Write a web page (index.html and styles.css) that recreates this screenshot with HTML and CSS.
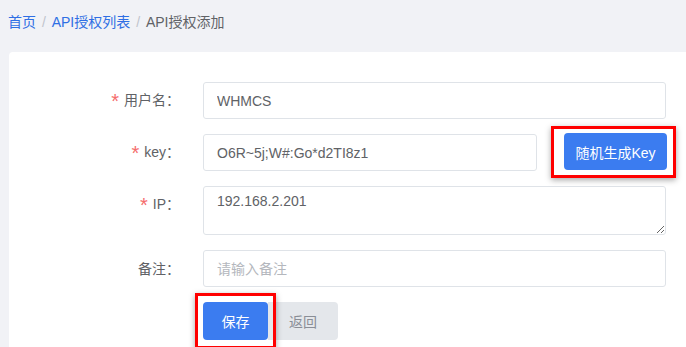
FILE: index.html
```html
<!DOCTYPE html>
<html lang="zh-CN">
<head>
    <meta charset="UTF-8">
    <title>API授权添加</title>
    <link rel="stylesheet" href="styles.css">
</head>
<body>
    <!-- Breadcrumb -->
    <nav class="breadcrumb">
        <a href="#">首页</a>
        <span class="sep">/</span>
        <a href="#">API授权列表</a>
        <span class="sep">/</span>
        <span class="current">API授权添加</span>
    </nav>

    <div class="card">
        <form class="api-form">
            <div class="form-row">
                <label class="form-label required">用户名：</label>
                <div class="form-field">
                    <input class="text-input" type="text" value="WHMCS">
                </div>
            </div>

            <div class="form-row">
                <label class="form-label required">key：</label>
                <div class="form-field key-field">
                    <input class="text-input" type="text" value="O6R~5j;W#:Go*d2TI8z1">
                    <span class="highlight highlight-key">
                        <button type="button" class="btn btn-primary btn-key">随机生成Key</button>
                    </span>
                </div>
            </div>

            <div class="form-row">
                <label class="form-label required label-top">IP：</label>
                <div class="form-field">
                    <textarea class="text-area">192.168.2.201</textarea>
                </div>
            </div>

            <div class="form-row">
                <label class="form-label">备注：</label>
                <div class="form-field">
                    <input class="text-input" type="text" placeholder="请输入备注">
                </div>
            </div>

            <div class="form-row">
                <span class="form-label"></span>
                <div class="form-field actions">
                    <span class="highlight highlight-save">
                        <button type="button" class="btn btn-primary btn-save">保存</button>
                    </span>
                    <button type="button" class="btn btn-back">返回</button>
                </div>
            </div>
        </form>
    </div>
</body>
</html>
```

FILE: styles.css
```css
/* Page basics */
body {
    margin: 0;
    height: 347px;
    background-color: #f1f2f6;
    font-family: "Liberation Sans", "Noto Sans CJK SC", sans-serif;
    font-size: 14px;
    color: #606266;
    overflow: hidden;
}

/* Breadcrumb */
.breadcrumb {
    padding: 13px 8px 0 8px;
    height: 40px;
    box-sizing: border-box;
    line-height: 18px;
}

.breadcrumb a {
    color: #2f6fe4;
    text-decoration: none;
}

.breadcrumb .sep {
    color: #c0c4cc;
    margin: 0 2px;
}

.breadcrumb .current {
    color: #606266;
}

/* Card */
.card {
    margin: 12px 0 0 9px;
    height: 295px;
    box-sizing: border-box;
    background-color: #fff;
    border-radius: 4px 0 0 0;
    padding-top: 30px;
    overflow: hidden;
}

/* Form layout */
.api-form {
    display: flex;
    flex-direction: column;
    gap: 15px;
}

.form-row {
    display: grid;
    grid-template-columns: 178px 463px;
    column-gap: 16px;
    align-items: center;
}

.form-label {
    text-align: right;
    color: #606266;
    line-height: 18px;
    padding-right: 7px;
}

.form-label.label-top {
    align-self: start;
    padding-top: 9px;
}

.required::before {
    content: "*";
    color: #f56c6c;
    font-size: 20px;
    margin-right: 5px;
    vertical-align: -3px;
}

.text-input,
.text-area {
    width: 100%;
    box-sizing: border-box;
    border: 1px solid #dfe3e8;
    border-radius: 3px;
    font-family: inherit;
    font-size: 14px;
    color: #606266;
    padding: 0 13px;
    outline: none;
}

.text-input {
    height: 37px;
}

.text-input::placeholder {
    color: #b4b7bd;
}

.text-area {
    height: 49px;
    padding-top: 6px;
    resize: vertical;
    display: block;
}

/* Key row: input + generate button */
.key-field {
    display: flex;
    align-items: center;
}

.key-field .text-input {
    width: 334px;
    flex: none;
}

/* Buttons */
.btn {
    border: none;
    border-radius: 4px;
    font-family: inherit;
    font-size: 14px;
    height: 37px;
    cursor: pointer;
}

.btn-primary {
    background-color: #3b7cf0;
    color: #fff;
}

.btn-key {
    width: 103px;
    height: 37px;
}

.btn-save {
    width: 65px;
    height: 38px;
}

.btn-back {
    width: 70px;
    height: 38px;
    background-color: #e4e7eb;
    color: #8a8e96;
    border-radius: 0 4px 4px 0;
}

.actions {
    display: flex;
    align-items: center;
}

/* Red annotation boxes */
.highlight {
    display: inline-flex;
    border: 3px solid #ff0000;
    box-shadow: 0 2px 6px rgba(0, 0, 0, 0.35);
    position: relative;
    z-index: 1;
}

.highlight-key {
    padding: 4px 6px 5px 10px;
    margin: -8px -10px -7px 14px;
}

.highlight-save {
    padding: 6px 5px;
    margin: -9px -8px -9px -8px;
}
```
